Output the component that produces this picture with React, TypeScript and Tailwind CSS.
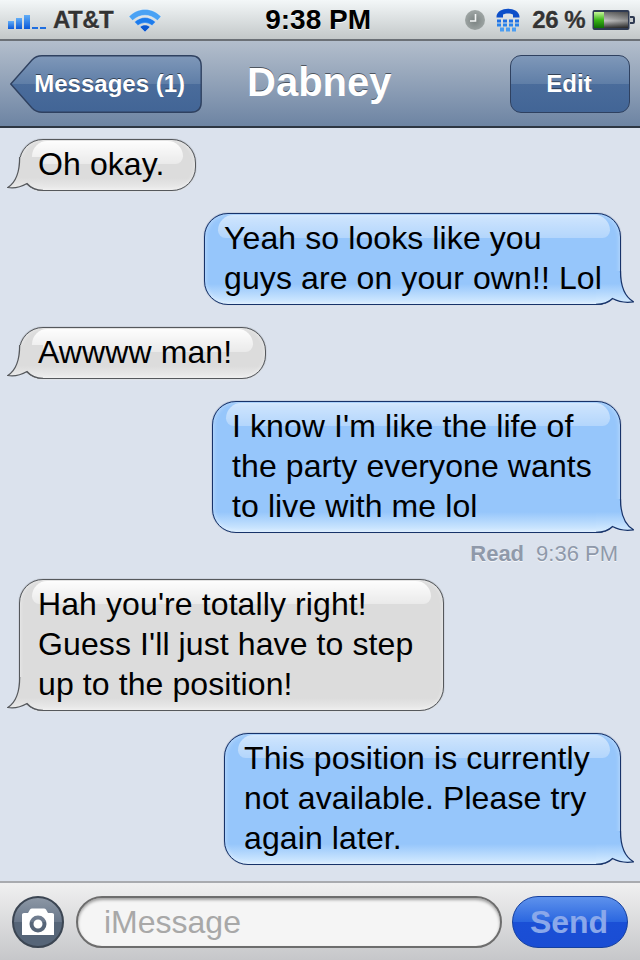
import React from 'react';

const font = 'font-["Liberation_Sans",Arial,sans-serif]';

const SignalBars = () => (
  <svg width="40" height="18" viewBox="0 0 40 18">
    <defs>
      <linearGradient id="sig" x1="0" y1="0" x2="0" y2="1">
        <stop offset="0" stopColor="#62aef7" />
        <stop offset="1" stopColor="#0a58d8" />
      </linearGradient>
    </defs>
    <rect x="0" y="10" width="6" height="8" fill="url(#sig)" />
    <rect x="8" y="7" width="6" height="11" fill="url(#sig)" />
    <rect x="16" y="4" width="6" height="14" fill="url(#sig)" />
    <rect x="24" y="16" width="6" height="2" fill="#1f6fe0" />
    <rect x="32" y="16" width="6" height="2" fill="#1f6fe0" />
  </svg>
);

const WifiIcon = () => (
  <svg width="34" height="26" viewBox="0 0 34 26" fill="none">
    <path d="M1 9.5 C10 0 24 0 33 9.5 L29.5 13.5 C21.5 6.5 12.5 6.5 4.5 13.5 Z" fill="#4aa2f4" stroke="#fff" strokeOpacity="0.5" strokeWidth="0.6" />
    <path d="M6.5 15 C13 9 21 9 27.5 15 L24 18.5 C20 15 14 15 10 18.5 Z" fill="#1d7cec" stroke="#fff" strokeOpacity="0.5" strokeWidth="0.6" />
    <path d="M12 20 C15 17.4 19 17.4 22 20 L17 25 Z" fill="#0b57d0" stroke="#fff" strokeOpacity="0.6" strokeWidth="0.6" />
  </svg>
);

const ClockIcon = () => (
  <svg width="20" height="20" viewBox="0 0 20 20">
    <defs>
      <radialGradient id="clockFace" cx="0.5" cy="0.55" r="0.55">
        <stop offset="0" stopColor="#7b8382" />
        <stop offset="1" stopColor="#a0a7a6" />
      </radialGradient>
    </defs>
    <circle cx="10" cy="10" r="10" fill="url(#clockFace)" />
    <path d="M10.5 4 V11 H5" fill="none" stroke="#f4f6f6" strokeWidth="1.6" />
  </svg>
);

const TtyIcon = () => (
  <svg width="24" height="24" viewBox="0 0 24 24">
    <path d="M0.5 9 C0.5 -2 23.5 -2 23.5 9 V9.5 H17 V6.5 C15 5 9 5 7 6.5 V9.5 H0.5 Z" fill="#0d4fc9" />
    {[1, 7, 13, 19].map(x => <rect key={x} x={x} y="11.5" width="4" height="3" fill="#1f70e4" />)}
    {[1, 7, 13, 19].map(x => <rect key={x} x={x} y="15.5" width="4" height="3" fill="#2a83ea" />)}
    {[4, 10, 16].map(x => <rect key={x} x={x} y="19.5" width="4" height="4" fill="#4a9df2" />)}
  </svg>
);

const BatteryIcon = () => (
  <svg width="44" height="22" viewBox="0 0 44 22">
    <defs>
      <linearGradient id="batEmpty" x1="0" y1="0" x2="0" y2="1">
        <stop offset="0" stopColor="#777" />
        <stop offset="0.55" stopColor="#dcdcdc" />
        <stop offset="1" stopColor="#3a3a3a" />
      </linearGradient>
      <linearGradient id="batShade" x1="0" y1="0" x2="1" y2="0">
        <stop offset="0" stopColor="#000" stopOpacity="0" />
        <stop offset="1" stopColor="#000" stopOpacity="0.35" />
      </linearGradient>
      <linearGradient id="batFull" x1="0" y1="0" x2="0" y2="1">
        <stop offset="0" stopColor="#c6f59a" />
        <stop offset="0.5" stopColor="#39b515" />
        <stop offset="1" stopColor="#0d6a05" />
      </linearGradient>
    </defs>
    <rect x="0.5" y="1" width="37" height="20" rx="2" fill="#2f3a52" />
    <rect x="2" y="3" width="34" height="16" fill="url(#batEmpty)" />
    <rect x="2" y="3" width="34" height="16" fill="url(#batShade)" />
    <rect x="2" y="3" width="10" height="16" fill="url(#batFull)" />
    <path d="M38 7 H41 Q43 7 43 9 V13 Q43 15 41 15 H38 Z" fill="#2f3a52" />
    <rect x="38" y="9" width="3" height="4" fill="#c9cdce" />
  </svg>
);

const CameraIcon = () => (
  <svg width="32" height="28" viewBox="0 0 32 28">
    <path
      fillRule="evenodd"
      d="M0 6.5 Q0 5 2 5 H6 L8 1.5 Q8.8 0.5 10 0.5 H22 Q23.2 0.5 24 1.5 L26 5 H30 Q32 5 32 6.5 V27 H0 Z M16 7.5 A8.5 8.5 0 1 0 16 24.5 A8.5 8.5 0 1 0 16 7.5 Z M16 11.5 A4.5 4.5 0 1 1 16 20.5 A4.5 4.5 0 1 1 16 11.5 Z"
      fill="#fff"
    />
  </svg>
);

const BackShape = () => (
  <svg className="absolute inset-0" width="192" height="58" viewBox="0 0 192 58">
    <defs>
      <linearGradient id="backFill" x1="0" y1="0" x2="0" y2="1">
        <stop offset="0" stopColor="#7f98b9" />
        <stop offset="0.5" stopColor="#5f7ea7" />
        <stop offset="0.5" stopColor="#4a6c9b" />
        <stop offset="1" stopColor="#426596" />
      </linearGradient>
    </defs>
    <path
      d="M0.8 29 L22 5 Q26 0.8 32 0.8 H181 Q191.2 0.8 191.2 11 V47 Q191.2 57.2 181 57.2 H32 Q26 57.2 22 53 Z"
      fill="url(#backFill)"
      stroke="#2f4160"
      strokeWidth="1.4"
    />
  </svg>
);

type TailProps = { id: string; c1: string; c2: string; stroke: string; fade: number };

const TailLeft = ({ id, c1, c2, stroke, fade }: TailProps) => (
  <svg className="absolute left-[-13px] bottom-[-1px]" width="46" height="34" viewBox="0 0 46 34">
    <defs>
      <linearGradient id={id} x1="0" y1="0" x2="0" y2="1">
        <stop offset={fade} stopColor={c1} />
        <stop offset="0.97" stopColor={c2} />
      </linearGradient>
    </defs>
    <path
      d="M12.7 0 C12.7 14 9.5 25 0.8 30.5 C7 31.5 14 30 20 26.5 C23 30 28 33.2 36 33.4 L36 0 Z"
      fill={`url(#${id})`}
    />
    <path
      d="M12.7 0 C12.7 14 9.5 25 0.8 30.5 C7 31.5 14 30 20 26.5 C23 30 28 33.2 36 33.4"
      fill="none"
      stroke={stroke}
      strokeWidth="1.2"
    />
  </svg>
);

const TailRight = ({ id, c1, c2, stroke, fade }: TailProps) => (
  <svg className="absolute right-[-14px] bottom-[-1px]" width="46" height="34" viewBox="0 0 46 34">
    <defs>
      <linearGradient id={id} x1="0" y1="0" x2="0" y2="1">
        <stop offset={fade} stopColor={c1} />
        <stop offset="0.97" stopColor={c2} />
      </linearGradient>
    </defs>
    <path
      d="M32.5 0 C32.5 14 35.5 25 45.5 30.8 C38 32 31 31 24.5 27.5 C21 31 16 33.3 8 33.4 L8 0 Z"
      fill={`url(#${id})`}
    />
    <path
      d="M32.5 0 C32.5 14 35.5 25 45.5 30.8 C38 32 31 31 24.5 27.5 C21 31 16 33.3 8 33.4"
      fill="none"
      stroke={stroke}
      strokeWidth="1.2"
    />
  </svg>
);

const Received = ({ id, width, lines }: { id: string; width: string; lines: string[] }) => (
  <div className={`relative self-start ml-[19px] ${width} rounded-[24px] border border-[#55585c] bg-[linear-gradient(to_top,#ececec_0px,#dcdcdc_12px)] pt-[4px] pb-[6px] pl-[18px] shadow-[0_0_1px_#55585c,0_1px_1px_rgba(255,255,255,0.6),inset_0_0_4px_rgba(255,255,255,0.5)]`}>
    <div className="absolute left-[12px] right-[12px] top-[1px] h-[23px] rounded-t-[20px] rounded-b-[10px] bg-[linear-gradient(to_bottom,rgba(255,255,255,0.95),rgba(255,255,255,0.4))]" />
    <TailLeft id={id} c1="#dcdcdc" c2="#ececec" stroke="#55585c" fade={0.62} />
    <div className="relative text-[32px] leading-[40px] tracking-[0.1px] text-black whitespace-nowrap">
      {lines.map(l => <div key={l}>{l}</div>)}
    </div>
  </div>
);

const Sent = ({ id, width, lines }: { id: string; width: string; lines: string[] }) => (
  <div className={`relative self-end mr-[19px] ${width} rounded-[24px] border border-[#17336a] bg-[linear-gradient(to_top,#d6ecff_0px,#96c6fb_20px)] pt-[4px] pb-[6px] pl-[19px] shadow-[0_0_1px_#17336a,0_1px_1px_rgba(255,255,255,0.6),inset_0_0_5px_rgba(255,255,255,0.45)]`}>
    <div className="absolute left-[13px] right-[10px] top-[1px] h-[23px] rounded-t-[20px] rounded-b-[10px] bg-[linear-gradient(to_bottom,rgba(255,255,255,0.55),rgba(255,255,255,0.28))]" />
    <TailRight id={id} c1="#96c6fb" c2="#d6ecff" stroke="#17336a" fade={0.38} />
    <div className="relative text-[32px] leading-[40px] tracking-[0.1px] text-black whitespace-nowrap">
      {lines.map(l => <div key={l}>{l}</div>)}
    </div>
  </div>
);

export default function App() {
  return (
    <div className={`flex h-[960px] w-[640px] flex-col overflow-hidden bg-[#dbe2ed] ${font}`}>
      {/* status bar */}
      <div className="flex h-[41px] shrink-0 items-center border-b-2 border-[#6b7076] bg-[linear-gradient(to_bottom,#f3f7f8,#c3c8c9)] pl-[8px] pr-[4px]">
        <SignalBars />
        <span className="ml-[5px] text-[24px] font-bold tracking-[-0.5px] text-[#333] [-webkit-text-stroke:0.3px_#333] [text-shadow:0_1px_0_rgba(255,255,255,0.8)]">AT&amp;T</span>
        <span className="ml-[15px]"><WifiIcon /></span>
        <span className="ml-[103px] text-[28px] font-bold text-black [text-shadow:0_1px_0_rgba(255,255,255,0.8)]">9:38 PM</span>
        <span className="ml-auto"><ClockIcon /></span>
        <span className="ml-[11px]"><TtyIcon /></span>
        <span className="ml-[12px] text-[24px] font-bold tracking-[-0.5px] text-[#333] [-webkit-text-stroke:0.3px_#333] [text-shadow:0_1px_0_rgba(255,255,255,0.8)]">26 %</span>
        <span className="ml-[7px]"><BatteryIcon /></span>
      </div>

      {/* nav bar */}
      <div className="flex h-[87px] shrink-0 items-center border-b-2 border-[#2d3642] bg-[linear-gradient(to_bottom,#b3becc,#6d84a3)] pl-[10px] pr-[10px]">
        <div className="relative flex h-[58px] w-[192px] items-center justify-end pr-[17px]">
          <BackShape />
          <span className="relative text-[24px] font-bold text-white [text-shadow:0_-1px_0_rgba(0,0,0,0.5)]">Messages (1)</span>
        </div>
        <span className="mb-[3px] ml-[45px] text-[40px] font-bold text-white [text-shadow:0_-1px_0_rgba(0,0,0,0.5)]">Dabney</span>
        <div className="ml-auto flex h-[58px] w-[120px] items-center justify-center rounded-[11px] border border-[#2f4160] bg-[linear-gradient(to_bottom,#7f98b9,#5f7ea7_50%,#4a6c9b_50%,#426596)] pr-[2px]">
          <span className="text-[24px] font-bold text-white [text-shadow:0_-1px_0_rgba(0,0,0,0.5)]">Edit</span>
        </div>
      </div>

      {/* conversation */}
      <div className="flex min-h-0 flex-1 flex-col pt-[11px]">
        <Received id="r1" width="w-[177px]" lines={['Oh okay.']} />
        <div className="h-[22px] shrink-0" />
        <Sent id="s1" width="w-[417px]" lines={['Yeah so looks like you', 'guys are on your own!! Lol']} />
        <div className="h-[22px] shrink-0" />
        <Received id="r2" width="w-[247px]" lines={['Awwww man!']} />
        <div className="h-[22px] shrink-0" />
        <Sent id="s2" width="w-[409px]" lines={["I know I'm like the life of", 'the party everyone wants', 'to live with me lol']} />
        <div className="mr-[22px] mt-[6px] flex h-[28px] items-center justify-end gap-[12px] text-[22px] text-[#8f99aa] [text-shadow:0_1px_0_rgba(255,255,255,0.7)]">
          <span className="font-bold">Read</span>
          <span>9:36 PM</span>
        </div>
        <div className="h-[12px] shrink-0" />
        <Received id="r3" width="w-[425px]" lines={["Hah you're totally right!", "Guess I'll just have to step", 'up to the position!']} />
        <div className="h-[22px] shrink-0" />
        <Sent id="s3" width="w-[397px]" lines={['This position is currently', 'not available. Please try', 'again later.']} />
      </div>

      {/* input bar */}
      <div className="flex h-[79px] shrink-0 items-center border-t-2 border-[#a9abaf] bg-[linear-gradient(to_bottom,#f0f0f0,#c6c7ca)] pl-[12px] pr-[12px]">
        <div className="flex h-[52px] w-[52px] items-center justify-center rounded-full border-2 border-[#3b4552] bg-[linear-gradient(to_bottom,#8c97a5,#69778a_50%,#566578_50%,#566578)]">
          <CameraIcon />
        </div>
        <div className="ml-[12px] flex h-[52px] w-[426px] items-center rounded-[26px] border-2 border-[#6d6d6d] bg-[#f5f5f5] pl-[26px] text-[32px] text-[#a8a8a8] shadow-[inset_0_2px_3px_rgba(0,0,0,0.35)]">
          iMessage
        </div>
        <div className="ml-auto flex h-[52px] w-[116px] items-center justify-center rounded-[26px] border border-[#15409f] bg-[linear-gradient(to_bottom,#5e92ec,#2a66e0_50%,#1a4fd6_50%,#1a4dd4)] pr-[2px] text-[32px] font-bold text-[#8aa8ea]">
          Send
        </div>
      </div>
    </div>
  );
}
